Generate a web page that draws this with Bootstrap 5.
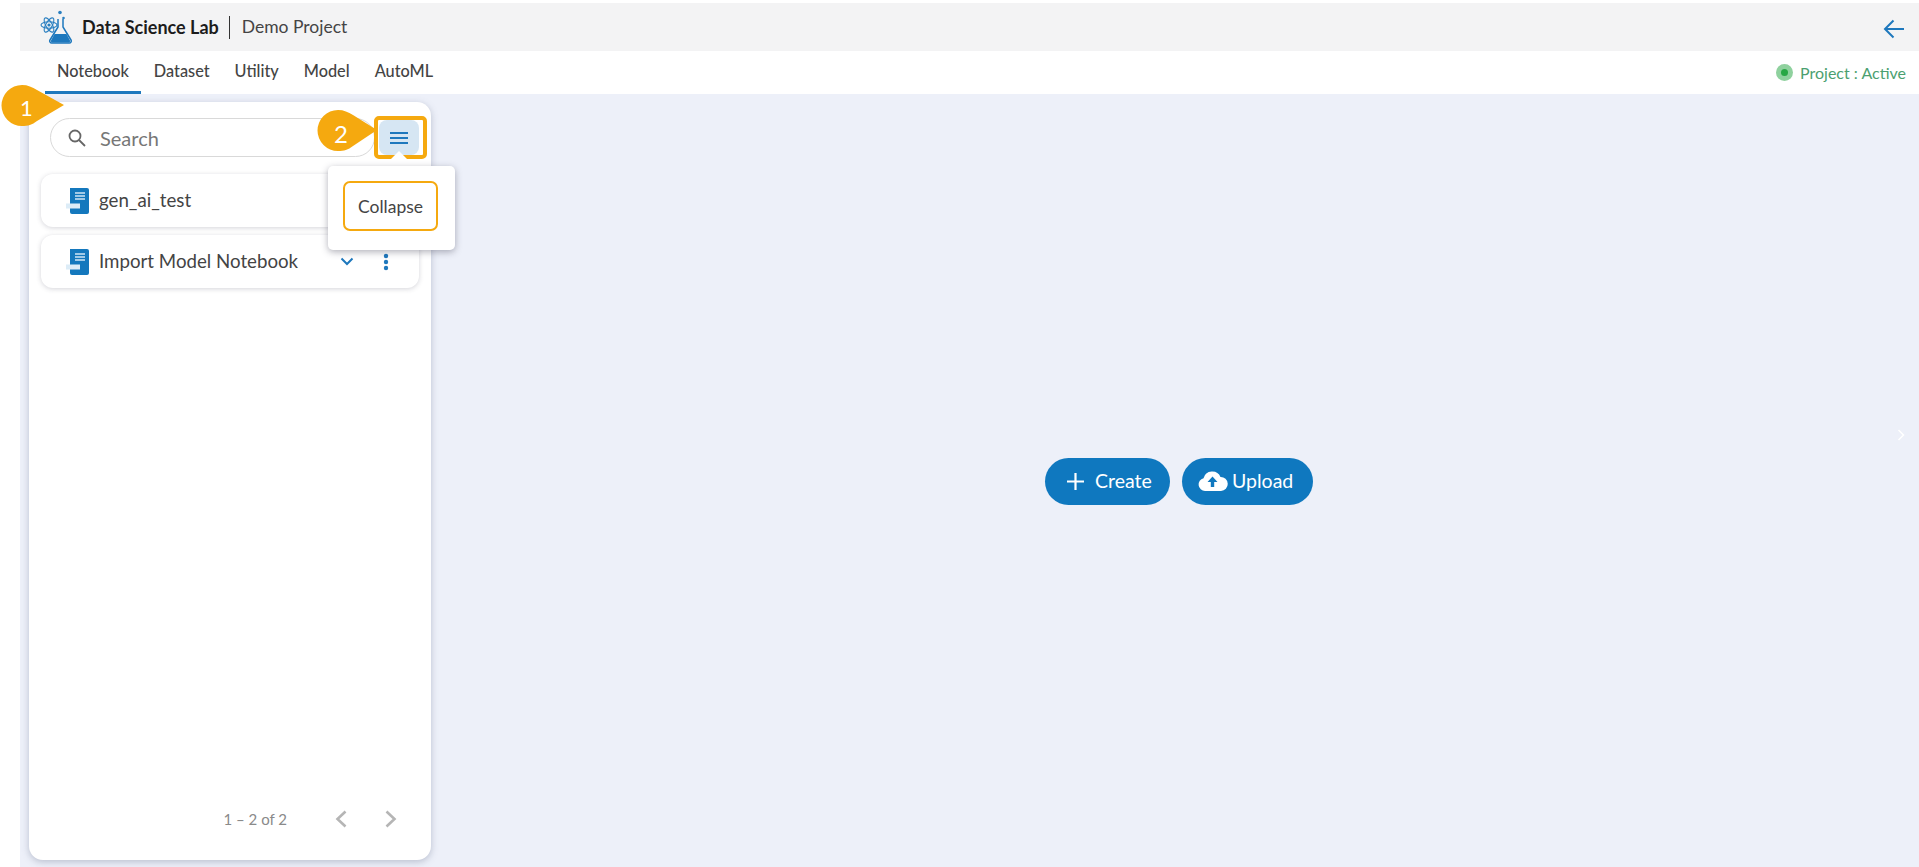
<!DOCTYPE html>
<html lang="en">
<head>
<meta charset="utf-8">
<title>Data Science Lab</title>
<link href="https://cdn.jsdelivr.net/npm/bootstrap@5.3.0/dist/css/bootstrap.min.css" rel="stylesheet">
<style>
html,body{height:100%;overflow:hidden}
body{background:#fff;font-family:"Lato","Noto Sans",sans-serif;color:#3f3f3f}
.app-shell{position:relative;height:867px;margin-left:20px;padding-top:3px;display:flex;flex-direction:column}
.top-bar{height:48px;background:#f3f3f4;padding:0 14px 0 20px}
.brand-name{font-size:18px;font-weight:700;color:#1c1c1c;margin-left:10px}
.brand-sep{width:1px;height:23px;background:#333;margin:0 12px 0 10px}
.project-name{font-size:17.500px;color:#444}
.back-arrow{margin-top:4px}
.tab-bar{height:43px;background:#fff;padding-left:25px;padding-right:13px}
.tab-item{font-size:16.300px;font-weight:500;color:#444;height:43px;padding:0 12px;display:flex;align-items:center;border-bottom:3px solid transparent;margin-right:1px}
.tab-item.on{border-bottom-color:#1e78bd}
.status-text{font-size:16px;color:#4c9f70;margin-left:7px}
.status-dot{width:17px;height:17px;border-radius:50%;background:#8fd19e;display:flex;align-items:center;justify-content:center}
.status-dot i{display:block;width:7px;height:7px;border-radius:50%;background:#28a745}
.work-area{flex:1;background:#edf0f9;min-height:0;padding:8px 0 7px 9px;position:relative}
.side-card{width:402px;border:0;border-radius:14px;box-shadow:0 2px 7px rgba(90,100,130,.35);padding:16px 12px 0 12px;height:100%}
.search-pill{height:39px;width:327px;margin-left:9px;border:1px solid #d9d9d9;border-radius:20px;padding-left:16px}
.search-word{font-size:20px;color:#777;margin-left:13px}
.menu-btn{width:40px;height:35px;background:#d6e6f3;border:0;border-radius:8px;margin-left:4px;padding:0;display:flex;align-items:center;justify-content:center}
.search-row{margin-bottom:17px}
.note-row{height:53px;border-radius:12px;box-shadow:0 1px 5px rgba(60,60,80,.22);background:#fff;padding:0 30px 0 25px;margin-bottom:8px;border:0}
.note-name{font-size:18.700px;color:#444;margin-left:10px}
.row-dots{margin-left:29px}
.pager{margin-top:auto;height:60px;padding-right:22px;padding-bottom:22px}
.pager-text{font-size:15px;color:#8a8a8a;margin-right:48px}
.pager-next{margin-left:38px}
.cta{background:#0f78bf;color:#fff;border:0;border-radius:24px;height:47px;font-size:19.500px;display:flex;align-items:center;padding:0}
.cta:hover{background:#0f78bf;color:#fff}
.cta-create{width:125px;padding-left:21px}
.cta-create .ms-2{margin-left:10px!important}
.cta-upload{width:131px;padding-left:15px}
.cta-row{padding-left:8px}
.pop-menu{position:absolute;left:308px;top:166px;width:127px;height:84px;background:#fff;border-radius:5px;box-shadow:0 2px 7px rgba(60,60,80,.4);padding:15px}
.pop-item{width:95px;height:50px;border:2px solid #f5a90f;border-radius:7px;font-size:17.500px;color:#444;display:flex;align-items:center;justify-content:center;padding-top:2px}
.hl-box{position:absolute;left:354px;top:116px;width:53px;height:43px;border:4px solid #f5a90f;border-radius:5px}
.pin{position:absolute}
.pin-one{left:-19px;top:84px}
.pin-two{left:297px;top:109px}
.pin-arrow{position:absolute;left:370px;top:150px}
.pin-num{position:absolute;color:#fff}
.num-one{left:0;top:91px;font-size:22px}
.num-two{left:314px;top:116px;font-size:24px}
.edge-mark{position:absolute;right:14px;top:429px}
</style>
</head>
<body>
<div class="app-shell">
  <header class="top-bar d-flex align-items-center">
    <svg width="32" height="34" viewBox="0 0 32 34" fill="none" aria-hidden="true">
      <g stroke="#2a7fc0" stroke-width="1.100"><ellipse cx="9" cy="15" rx="8" ry="3.200"/><ellipse cx="9" cy="15" rx="8" ry="3.200" transform="rotate(60 9 15)"/><ellipse cx="9" cy="15" rx="8" ry="3.200" transform="rotate(120 9 15)"/></g>
      <circle cx="9" cy="15" r="1.600" fill="#2a7fc0"/><circle cx="20" cy="2.500" r="1.800" fill="#2a7fc0"/><circle cx="23.500" cy="8" r="1.300" fill="#2a7fc0"/>
      <path d="M18 9v8L10 30a2 2 0 0 0 2 3h17a2 2 0 0 0 2-3L23 17V9" stroke="#1e78bd" stroke-width="1.500"/>
      <path d="M14.500 24h12l3.500 6.500a1.500 1.500 0 0 1-1.500 2H12.500a1.500 1.500 0 0 1-1.500-2z" fill="#1e78bd"/>
    </svg>
    <span class="brand-name">Data Science Lab</span><span class="brand-sep"></span><span class="project-name">Demo Project</span>
    <svg class="ms-auto back-arrow" width="22" height="22" viewBox="0 0 22 22" fill="none" stroke="#1e78bd" stroke-width="2" aria-hidden="true"><path d="M21 11H2M10.500 2.500 2 11l8.500 8.500"/></svg>
  </header>
  <nav class="tab-bar d-flex align-items-center">
    <span class="tab-item on">Notebook</span><span class="tab-item">Dataset</span><span class="tab-item">Utility</span><span class="tab-item">Model</span><span class="tab-item">AutoML</span>
    <span class="status-dot ms-auto"><i></i></span><span class="status-text">Project : Active</span>
  </nav>
  <main class="work-area d-flex">
    <section class="card side-card">
      <div class="search-row d-flex align-items-center">
        <div class="search-pill d-flex align-items-center">
          <svg width="20" height="20" viewBox="0 0 20 20" fill="none" stroke="#666" stroke-width="1.800" aria-hidden="true"><circle cx="8" cy="8" r="5.500"/><path d="m12 12 6 6"/></svg>
          <span class="search-word">Search</span>
        </div>
        <button class="menu-btn" type="button" aria-label="Menu">
          <svg width="20" height="14" viewBox="0 0 20 14" fill="none" stroke="#1e78bd" stroke-width="2" aria-hidden="true"><path d="M1 2h18M1 7h18M1 12h18"/></svg>
        </button>
      </div>
      <div class="note-row d-flex align-items-center">
        <svg width="23" height="26" viewBox="0 0 23 26" aria-hidden="true"><path d="M4 0h17a2 2 0 0 1 2 2v22a2 2 0 0 1-2 2H6a2 2 0 0 1-2-2z" fill="#1478bd"/><path d="M9 5h10M9 8h10M9 11h10" stroke="#cfe5f5" stroke-width="1.600"/><rect x="0" y="15.500" width="14" height="5" fill="#dcecf7"/></svg>
        <span class="note-name">gen_ai_test</span>
      </div>
      <div class="note-row d-flex align-items-center">
        <svg width="23" height="26" viewBox="0 0 23 26" aria-hidden="true"><path d="M4 0h17a2 2 0 0 1 2 2v22a2 2 0 0 1-2 2H6a2 2 0 0 1-2-2z" fill="#1478bd"/><path d="M9 5h10M9 8h10M9 11h10" stroke="#cfe5f5" stroke-width="1.600"/><rect x="0" y="15.500" width="14" height="5" fill="#dcecf7"/></svg>
        <span class="note-name">Import Model Notebook</span>
        <svg class="ms-auto" width="14" height="9" viewBox="0 0 14 9" fill="none" stroke="#1e78bd" stroke-width="2" aria-hidden="true"><path d="m1.500 1.500 5.500 5.500 5.500-5.500"/></svg>
        <svg class="row-dots" width="6" height="18" viewBox="0 0 6 18" fill="#1e78bd" aria-hidden="true"><circle cx="3" cy="3" r="2.200"/><circle cx="3" cy="9" r="2.200"/><circle cx="3" cy="15" r="2.200"/></svg>
      </div>
      <div class="pager d-flex align-items-center justify-content-end">
        <span class="pager-text">1 – 2 of 2</span>
        <svg width="12" height="18" viewBox="0 0 12 18" fill="none" stroke="#b5b5b5" stroke-width="2.600" aria-hidden="true"><path d="M10.500 1.500 2.500 9l8 7.500"/></svg>
        <svg class="pager-next" width="12" height="18" viewBox="0 0 12 18" fill="none" stroke="#b5b5b5" stroke-width="2.600" aria-hidden="true"><path d="m1.500 1.500 8 7.500-8 7.500"/></svg>
      </div>
    </section>
    <div class="cta-row flex-grow-1 d-flex align-items-center justify-content-center gap-2">
      <button class="btn cta cta-create" type="button">
        <svg width="19" height="19" viewBox="0 0 19 19" stroke="#fff" stroke-width="2.200" aria-hidden="true"><path d="M9.500 1v17M1 9.500h17"/></svg><span class="ms-2">Create</span>
      </button>
      <button class="btn cta cta-upload ms-1" type="button">
        <svg width="31" height="20" viewBox="0 0 31 20" aria-hidden="true"><path d="M8 20a6.500 6.500 0 0 1-1.500-12.800A9 9 0 0 1 23.500 6 7 7 0 0 1 24 20z" fill="#fff"/><path d="M15.500 5.500 10.500 11h3.300v5h3.400v-5h3.300z" fill="#0f78bf"/></svg><span class="ms-1">Upload</span>
      </button>
    </div>
  </main>

  <svg class="pin pin-one" width="66" height="44" viewBox="0 0 66 44" aria-hidden="true"><path d="M21 1C27 1 31 3 36 6L63 21 36 37C31 41 27 42 21 42A20.500 20.500 0 0 1 21 1z" fill="#f5a90f"/></svg>
  <div class="hl-box"></div>
  <svg class="pin pin-two" width="62" height="44" viewBox="0 0 62 44" aria-hidden="true"><path d="M21 1C27 1 31 3 36 6L60 21 36 37C31 41 27 42 21 42A20.500 20.500 0 0 1 21 1z" fill="#f5a90f"/></svg>
  <svg class="pin pin-arrow" width="18" height="10" viewBox="0 0 18 10" aria-hidden="true"><path d="M0 10 9 1l9 9z" fill="#fff"/></svg>
  <div class="pop-menu"><div class="pop-item">Collapse</div></div>
  <svg class="edge-mark" width="8" height="12" viewBox="0 0 8 12" fill="none" stroke="#fff" stroke-width="1.500" aria-hidden="true"><path d="m1.500 1 5 5-5 5"/></svg>
  <span class="pin-num num-one">1</span>
  <span class="pin-num num-two">2</span>
</div>
<script src="https://cdn.jsdelivr.net/npm/bootstrap@5.3.0/dist/js/bootstrap.bundle.min.js"></script>
</body>
</html>
